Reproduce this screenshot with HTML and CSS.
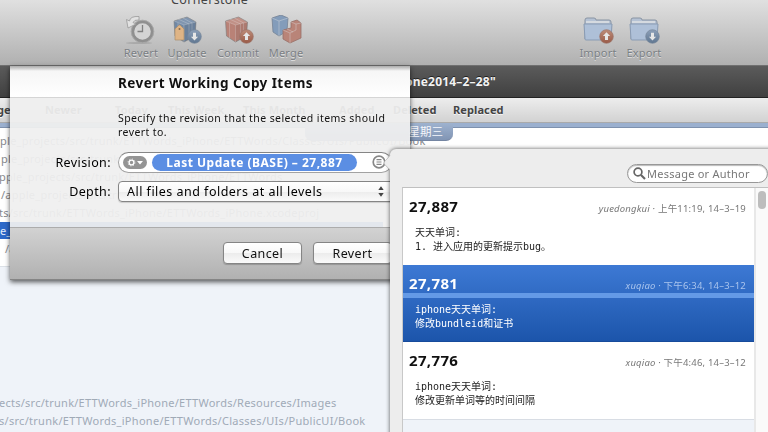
FILE: index.html
```html
<!DOCTYPE html>
<html lang="en">
<head>
<meta charset="utf-8">
<title>Cornerstone</title>
<link rel="stylesheet" href="styles.css">
</head>
<body>
<svg class="defs" width="0" height="0" aria-hidden="true">
  <defs>
    <linearGradient id="blueBall" x1="0" y1="0" x2="0" y2="1"><stop offset="0" stop-color="#8c9fb8"/><stop offset="1" stop-color="#607791"/></linearGradient>
    <linearGradient id="redBall" x1="0" y1="0" x2="0" y2="1"><stop offset="0" stop-color="#bd8b78"/><stop offset="1" stop-color="#995b48"/></linearGradient>
    <symbol id="box" viewBox="0 0 24 27">
      <path d="M1 5 14 1 23 6 22 20 11 26 2 20Z" fill="currentColor" stroke="#777" stroke-opacity=".55"/>
      <path d="M1 5 11 9 23 6 14 1Z" fill="#fff" fill-opacity=".12"/>
      <path d="M11 9v17M1 5l10 4 12-3M5 3l11 5v15M10 2l9 5v14M5 7v15" fill="none" stroke="#eee" stroke-opacity=".25"/>
      <path d="M11 9 23 6 22 20 11 26Z" fill="#222" fill-opacity=".08"/>
    </symbol>
    <symbol id="up" viewBox="0 0 15 15"><circle cx="7.5" cy="7.5" r="6.8" fill="url(#redBall)" stroke="#9b7468" stroke-width=".7"/><path d="M7.5 3.2 3.9 7H6v4h3V7h2.1Z" fill="#e6e6e6"/></symbol>
    <symbol id="down" viewBox="0 0 15 15"><circle cx="7.5" cy="7.5" r="6.8" fill="url(#blueBall)" stroke="#778799" stroke-width=".7"/><path d="M7.5 11.5 3.9 7.7H6v-4h3v4h2.1Z" fill="#e6e6e6"/></symbol>
    <symbol id="folder" viewBox="0 0 30 25">
      <path d="M2 22V3q0-2 2-2h7q2 0 2 2h13q2 0 2 2v17Z" fill="#b5c2d4" stroke="#8994a3"/>
      <path d="M3 5h23" stroke="#e0e2e5" stroke-width="1.5"/>
      <path d="M1 7h28l-1 15q0 1-1 1H3q-1 0-1-1Z" fill="#aec0d8" stroke="#899bb3"/>
    </symbol>
  </defs>
</svg>
<div class="window">
  <header class="toolbar">
    <div class="app-name">Cornerstone</div>
    <div class="tools">
      <div class="tool revert"><svg width="32" height="30" viewBox="0 0 32 30"><ellipse cx="14" cy="28" rx="13" ry="1" fill="#999" opacity=".6"/><circle cx="17.500" cy="16.500" r="9.800" fill="#d4d4d4" stroke="#8f8f8f" stroke-width="3"/><circle cx="17.500" cy="16.500" r="11.300" fill="none" stroke="#a8a8a8"/><path d="M17.500 10v6.500h-5" fill="none" stroke="#808080" stroke-width="1.300"/><path d="M14 1.500Q5 1 4.500 6L1.500 4.500 3 13l8-4-3-1.500q1-3 6-2.500Z" fill="#e2e2e2" stroke="#999" stroke-width=".8"/></svg><span>Revert</span></div>
      <div class="tool update"><svg width="32" height="30" viewBox="0 0 32 30"><use href="#box" x="2" y="1" width="24" height="27" color="#7088a5"/><path d="M4 25V14l4-4h1l4 4v11Z" fill="#dfb485" stroke="#a98c6c" stroke-width=".7"/><circle cx="8.500" cy="14" r="1" fill="#846a4c"/><use href="#down" x="16" y="14" width="15" height="15"/></svg><span>Update</span></div>
      <div class="tool commit"><svg width="32" height="30" viewBox="0 0 32 30"><use href="#box" x="2" y="1" width="25" height="27" color="#b98277"/><use href="#up" x="17" y="14" width="15" height="15"/></svg><span>Commit</span></div>
      <div class="tool merge"><svg width="32" height="30" viewBox="0 0 32 30"><path d="M2 3 11 0l7 3-1 13-8 5-6-4Z" fill="#839cba" stroke="#758396" stroke-width=".8"/><path d="M2 3l7 3 9-3M9 6v15" fill="none" stroke="#cbd1d9" stroke-opacity=".5"/><path d="M21 7l6-2 4 3v15l-11 5-7-4V15l8-2Z" fill="#b98478" stroke="#987068" stroke-width=".8"/><path d="M13 15l7 3v10M20 18l6-3V9l5-1M21 7l5 2M17 14l6 3" fill="none" stroke="#ddd" stroke-opacity=".4"/></svg><span>Merge</span></div>
      <div class="tool import"><svg width="32" height="30" viewBox="0 0 32 30"><use href="#folder" x="1" y="2" width="30" height="25"/><use href="#up" x="17" y="14" width="15" height="15"/></svg><span>Import</span></div>
      <div class="tool export"><svg width="32" height="30" viewBox="0 0 32 30"><use href="#folder" x="1" y="2" width="30" height="25"/><use href="#down" x="17" y="14" width="15" height="15"/></svg><span>Export</span></div>
    </div>
  </header>
  <div class="titlebar"><span>one2014–2–28"</span></div>
  <nav class="filters">
    <span class="f-changes">ge</span><span class="f-newer">Newer</span><span class="f-today">Today</span><span class="f-week">This Week</span><span class="f-month">This Month</span><span class="f-added">Added</span><span class="f-deleted">Deleted</span><span>Replaced</span>
  </nav>
  <main class="list">
    <div class="strip"><div class="day">星期三</div></div>
    <ul class="paths">
      <li class="first">ple_projects/src/trunk/ETTWords_iPhone/ETTWords/Classes/UIs/PublicUI/Book</li>
      <li class="in1">ple_projects/src/trunk/ETTWords_iPhone/ETTWords/Classes</li>
      <li class="in3">pple_projects/src/trunk/ETTWords_iPhone/ETTWords</li>
      <li class="in2">/apple_projects/src/trunk/ETTWords_iPhone</li>
      <li class="in3">ts/src/trunk/ETTWords_iPhone/ETTWords_iPhone.xcodeproj</li>
      <li class="selected">e_</li>
      <li class="in4">/apple</li>
    </ul>
  </main>
  <section class="lower">
    <p class="p1">ects/src/trunk/ETTWords_iPhone/ETTWords/Resources/Images</p>
    <p class="p2">s/src/trunk/ETTWords_iPhone/ETTWords/Classes/UIs/PublicUI/Book</p>
  </section>

  <section class="sheet">
    <h1>Revert Working Copy Items</h1>
    <div class="form">
      <p class="hint">Specify the revision that the selected items should<br>revert to.</p>
      <div class="row"><label>Revision:</label>
        <div class="token-field">
          <svg class="gear" width="24" height="13" viewBox="0 0 24 13"><rect width="24" height="13" rx="6.500" fill="#949494"/><circle cx="8.500" cy="6.500" r="2.400" fill="none" stroke="#fff" stroke-width="1.400"/><circle cx="8.500" cy="6.500" r="3.500" fill="none" stroke="#fff" stroke-width=".8" stroke-dasharray="1.100 1.650"/><path d="M14 5h6l-3 3.500Z" fill="#fff"/></svg>
          <span class="token">Last Update (BASE) – 27,887</span>
          <svg class="picker" width="14" height="14" viewBox="0 0 14 14"><circle cx="7" cy="7" r="5.800" fill="#fff" stroke="#888" stroke-width="1.700"/><path d="M4.500 4.700h5M4.500 7h5M4.500 9.300h5" stroke="#888" stroke-width="1.200"/></svg>
        </div>
      </div>
      <div class="row second"><label>Depth:</label>
        <div class="select"><span>All files and folders at all levels</span><svg width="6" height="11" viewBox="0 0 6 11"><path d="M0.300 4 3 .3 5.700 4ZM.3 7 3 10.700 5.700 7Z" fill="#444"/></svg></div>
      </div>
    </div>
    <footer><button class="cancel">Cancel</button><button class="ok">Revert</button></footer>
  </section>

  <aside class="popover">
    <svg class="arrow" width="8" height="19" viewBox="0 0 8 19"><path d="M8 0C6 5 1 8 1 10s5 4 7 9Z" fill="#ededed"/><path d="M7 2C5 6 1 8 1 10s4 4 6 7" fill="none" stroke="#aaa" stroke-width=".7"/></svg>
    <div class="search"><svg width="13" height="13" viewBox="0 0 13 13"><circle cx="5" cy="5" r="3.900" fill="none" stroke="#666" stroke-width="1.700"/><path d="M8 8l4 4" stroke="#666" stroke-width="2.200"/></svg><span>Message or Author</span></div>
    <div class="revisions">
      <div class="cards">
        <article><div class="head"><b>27,887</b><small><i>yuedongkui</i> · 上午11:19, 14–3–19</small></div><p>天天单词:<br>1. 进入应用的更新提示bug。</p></article>
        <article class="active"><div class="head"><b>27,781</b><small><i>xuqiao</i> · 下午6:34, 14–3–12</small></div><p>iphone天天单词:<br>修改bundleid和证书</p></article>
        <article><div class="head"><b>27,776</b><small><i>xuqiao</i> · 下午4:46, 14–3–12</small></div><p>iphone天天单词:<br>修改更新单词等的时间间隔</p></article>
      </div>
      <div class="scroll"><div class="thumb"></div></div>
    </div>
  </aside>
</div>
</body>
</html>
```

FILE: styles.css
```css
* { box-sizing: border-box; }
body { margin: 0; font-family: "Noto Sans", "Noto Sans CJK SC", sans-serif; }
h1, p, ul { margin: 0; padding: 0; }
.defs { position: absolute; }
svg { display: block; flex: none; }
.window { position: relative; width: 768px; height: 432px; overflow: hidden; background: #eff3f9; white-space: nowrap; }

.toolbar { height: 66px; background: linear-gradient(#e0e0e0, #b0b0b0); border-bottom: 1px solid #707070; overflow: hidden; }
.app-name { height: 14px; margin-top: -7px; padding-left: 171px; font-size: 12.500px; line-height: 14px; letter-spacing: .35px; color: #444; }
.tools { display: flex; padding: 8px 0 0 117px; }
.tool { width: 48px; display: flex; flex-direction: column; align-items: center; font-size: 11px; line-height: 14px; letter-spacing: .2px; color: #7b7f84; text-shadow: 0 1px 0 #dedede; }
.tool svg { margin-bottom: 1px; }
.tool.update { margin-left: -2px; }
.tool.commit { margin-left: 3px; }
.tool.import { margin-left: 264px; }
.tool.export { margin-left: -2px; }

.titlebar { height: 32px; background: linear-gradient(#5b5b5b, #404040); border-bottom: 1px solid #222; color: #f3f3f3; font-size: 12px; font-weight: 700; line-height: 32px; letter-spacing: .2px; padding-left: 405px; text-shadow: 0 -1px 0 #222; }
.filters { display: flex; height: 25px; background: linear-gradient(#ededed, #d2d2d2); border-bottom: 1px solid #aaa; font-size: 11px; font-weight: 700; line-height: 24px; letter-spacing: .1px; color: #444; text-shadow: 0 1px 0 #f5f5f5; }
.f-changes { width: 48px; margin-left: -3px; }
.f-newer { width: 70px; }
.f-today { width: 53px; }
.f-week { width: 75px; }
.f-month { width: 96px; }
.f-added { width: 54px; }
.f-deleted { width: 60px; }

.list { height: 144px; background: #fff; border-bottom: 1px solid #dce1e7; overflow: hidden; }
.strip { height: 5px; padding-left: 305px; background: #9bb0cf; border-bottom: 1px solid #7e91ad; }
.day { width: 148px; height: 18px; padding-right: 10px; text-align: right; background: linear-gradient(#9eb2cf, #8195b4); border-radius: 0 0 7px 7px; border-bottom: 1px solid #7485a2; color: #f5f7fb; font-size: 11.500px; line-height: 17px; position: relative; }
.paths { list-style: none; padding-top: 4px; font-size: 11px; line-height: 18px; letter-spacing: .24px; color: #87898d; }
.paths li { height: 18px; }
.paths .first { letter-spacing: .27px; }
.in1 { padding-left: 1px; }
.in2 { padding-left: 1px; }
.in3 { text-indent: -1px; }
.in4 { padding-left: 5px; }
.paths .selected { width: 383px; height: 17px; margin-bottom: 1px; line-height: 17px; background: #2d69c9; color: #e4edfa; }

.lower { padding-top: 128px; font-size: 11px; line-height: 18px; color: #a0aab7; }
.p1 { letter-spacing: .25px; text-indent: -1px; }
.p2 { letter-spacing: .28px; text-indent: -1px; }
.lower p { position: relative; top: -1px; }

.sheet { position: absolute; left: 10px; top: 66px; width: 400px; height: 214px; background: rgba(239,239,239,.94); backdrop-filter: blur(.7px); box-shadow: 0 2px 5px rgba(0,0,0,.65); border-bottom: 1px solid #858585; }
.sheet::before { content: ""; position: absolute; left: 0; right: 0; top: 0; height: 5px; background: linear-gradient(rgba(0,0,0,.3), transparent); }
.sheet h1 { height: 32px; padding-left: 108px; background: linear-gradient(#f4f4f4, #fff); border-bottom: 1px solid #d5d5d5; font-size: 13.500px; line-height: 34px; letter-spacing: .44px; color: #111; }
.form { height: 129px; padding-top: 13px; }
.hint { height: 28px; margin-left: 108px; font-size: 10.500px; line-height: 14px; letter-spacing: .41px; color: #111; }
.row { display: flex; height: 22px; margin-top: 12px; align-items: center; }
.row.second { margin-top: 7px; }
.row label { width: 101px; margin-right: 7px; text-align: right; font-size: 12.500px; letter-spacing: .4px; }
.token-field { display: flex; align-items: center; width: 274px; height: 21px; padding: 0 4px; border: 1px solid #a2a2a2; border-top-color: #858585; border-radius: 11px; background: #fff; }
.token { width: 205px; height: 17px; margin-left: 5px; border-radius: 8.500px; background: #5b8ee3; color: #fff; text-align: center; font-size: 12px; line-height: 17px; font-weight: 700; letter-spacing: .5px; }
.picker { margin-left: 15px; }
.select { display: flex; align-items: center; justify-content: space-between; width: 276px; height: 21px; padding: 0 9px 0 8px; border: 1px solid #858585; border-radius: 4px; background: linear-gradient(#fff, #f8f8f8 50%, #ececec 51%, #fafafa); font-size: 12.500px; letter-spacing: .48px; box-shadow: 0 1px 1px rgba(0,0,0,.15); }
.sheet footer { height: 52px; display: flex; padding: 14px 0 0 213px; background: linear-gradient(#d2d2d2, #b1b1b1); border-top: 1px solid #acacac; }
.sheet button { width: 79px; height: 22px; margin: 0 11px 0 0; padding: 0; border: 1px solid #858585; border-radius: 4px; background: linear-gradient(#fff, #f8f8f8 50%, #ececec 51%, #fafafa); font: 12.500px/19px "Noto Sans", sans-serif; letter-spacing: .4px; color: #111; box-shadow: 0 1px 1px rgba(0,0,0,.2); }

.popover { position: absolute; left: 390px; top: 149px; width: 390px; height: 300px; padding: 15px 12px 0; background: #ededed; border-radius: 6px 0 0 0; box-shadow: 0 0 4px rgba(0,0,0,.65); }
.arrow { position: absolute; left: -7px; top: 4px; }
.search { display: flex; align-items: center; width: 141px; height: 19px; margin: 0 0 4px 225px; padding-left: 5px; border: 1px solid #989898; border-radius: 10px; background: #fff; color: #777; font-size: 11px; letter-spacing: .25px; box-shadow: inset 0 1px 1px #bbb; }
.search span { margin-left: 1px; line-height: 18px; }
.revisions { display: flex; height: 250px; border-top: 1px solid #c0c0c0; border-left: 1px solid #c8c8c8; background: #eff3f9; }
.cards { width: 351px; }
article { height: 77px; padding: 8px 8px 0 6px; background: #fff; }
article:last-child { border-bottom: 1px solid #d8dde4; height: 78px; }
.head { display: flex; justify-content: space-between; height: 20px; }
.head b { font-size: 15px; line-height: 20px; letter-spacing: .35px; color: #111; }
.head small { font-size: 9.500px; line-height: 26px; letter-spacing: .19px; color: #777; }
article p { margin: 10px 0 0 6px; font: 10px/14px "DejaVu Sans Mono", "Noto Sans CJK SC", monospace; color: #222; }
.active { border-bottom: 1px solid #174b9b; background: linear-gradient(transparent 28px, #649ae6 28px, #649ae6 33px, transparent 33px), linear-gradient(#3d79d4, #1c55ab); }
.active b, .active p { color: #fff; }
.active small { color: #a9c4ed; }
.scroll { flex: 1; border-left: 2px solid #e8e8e8; background: #fafafa; }
.thumb { width: 8px; height: 18px; margin: 3px 0 0 2px; border-radius: 4px; background: #bdbdbd; }
```
